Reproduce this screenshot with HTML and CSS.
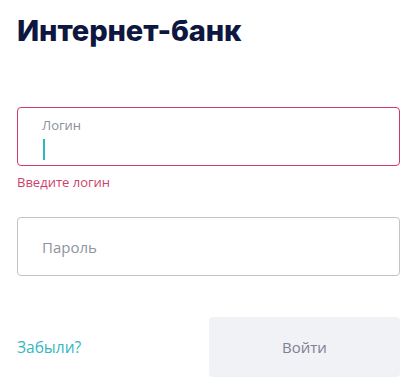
FILE: index.html
```html
<!DOCTYPE html>
<html lang="ru">
<head>
    <meta charset="UTF-8">
    <meta name="viewport" content="width=device-width, initial-scale=1.0">
    <title>Интернет-банк</title>
    <link rel="stylesheet" href="styles.css">
</head>
<body>
    <div class="login-form">
        <h1 class="form-title">Интернет-банк</h1>

        <div class="field field-error">
            <label class="field-label">Логин</label>
            <span class="caret"></span>
        </div>
        <div class="error-text">Введите логин</div>

        <div class="field">
            <span class="placeholder">Пароль</span>
        </div>

        <div class="form-actions">
            <a href="#" class="forgot-link">Забыли?</a>
            <button class="submit-button">Войти</button>
        </div>
    </div>
</body>
</html>
```

FILE: styles.css
```css
body {
    margin: 0;
    font-family: "Open Sans", "Noto Sans", Arial, sans-serif;
    background-color: #ffffff;
    color: #333;
}

.login-form {
    width: 383px;
    padding: 0 0 0 17px;
}

.form-title {
    font-family: Inter, "Noto Sans", sans-serif;
    font-weight: 800;
    font-size: 29px;
    line-height: 36px;
    color: #0e1740;
    margin: 13px 0 58px;
    letter-spacing: -0.1px;
}

.field {
    box-sizing: border-box;
    height: 59px;
    border: 1px solid #c3c4cb;
    border-radius: 4px;
    padding: 0 24px;
    display: flex;
    flex-direction: column;
    justify-content: center;
}

.field-error {
    border-color: #cf3a6b;
    justify-content: flex-start;
    padding-top: 9px;
}

.field-label {
    font-size: 13px;
    line-height: 16px;
    color: #8b8f9c;
}

.caret {
    display: block;
    width: 1.5px;
    height: 21px;
    margin: 6px 0 0 1px;
    background-color: #2fb8bb;
}

.placeholder {
    font-size: 15px;
    color: #8e93a0;
}

.error-text {
    font-size: 13px;
    line-height: 16px;
    color: #cf3f6c;
    margin: 8px 0 27px;
}

.form-actions {
    display: flex;
    justify-content: space-between;
    align-items: center;
    margin-top: 41px;
}

.forgot-link {
    font-size: 15.5px;
    color: #36b7c0;
    text-decoration: none;
}

.submit-button {
    width: 191px;
    height: 60px;
    border: none;
    border-radius: 4px;
    background-color: #f1f2f6;
    color: #7d8190;
    font-family: inherit;
    font-size: 15px;
    cursor: pointer;
}
```
